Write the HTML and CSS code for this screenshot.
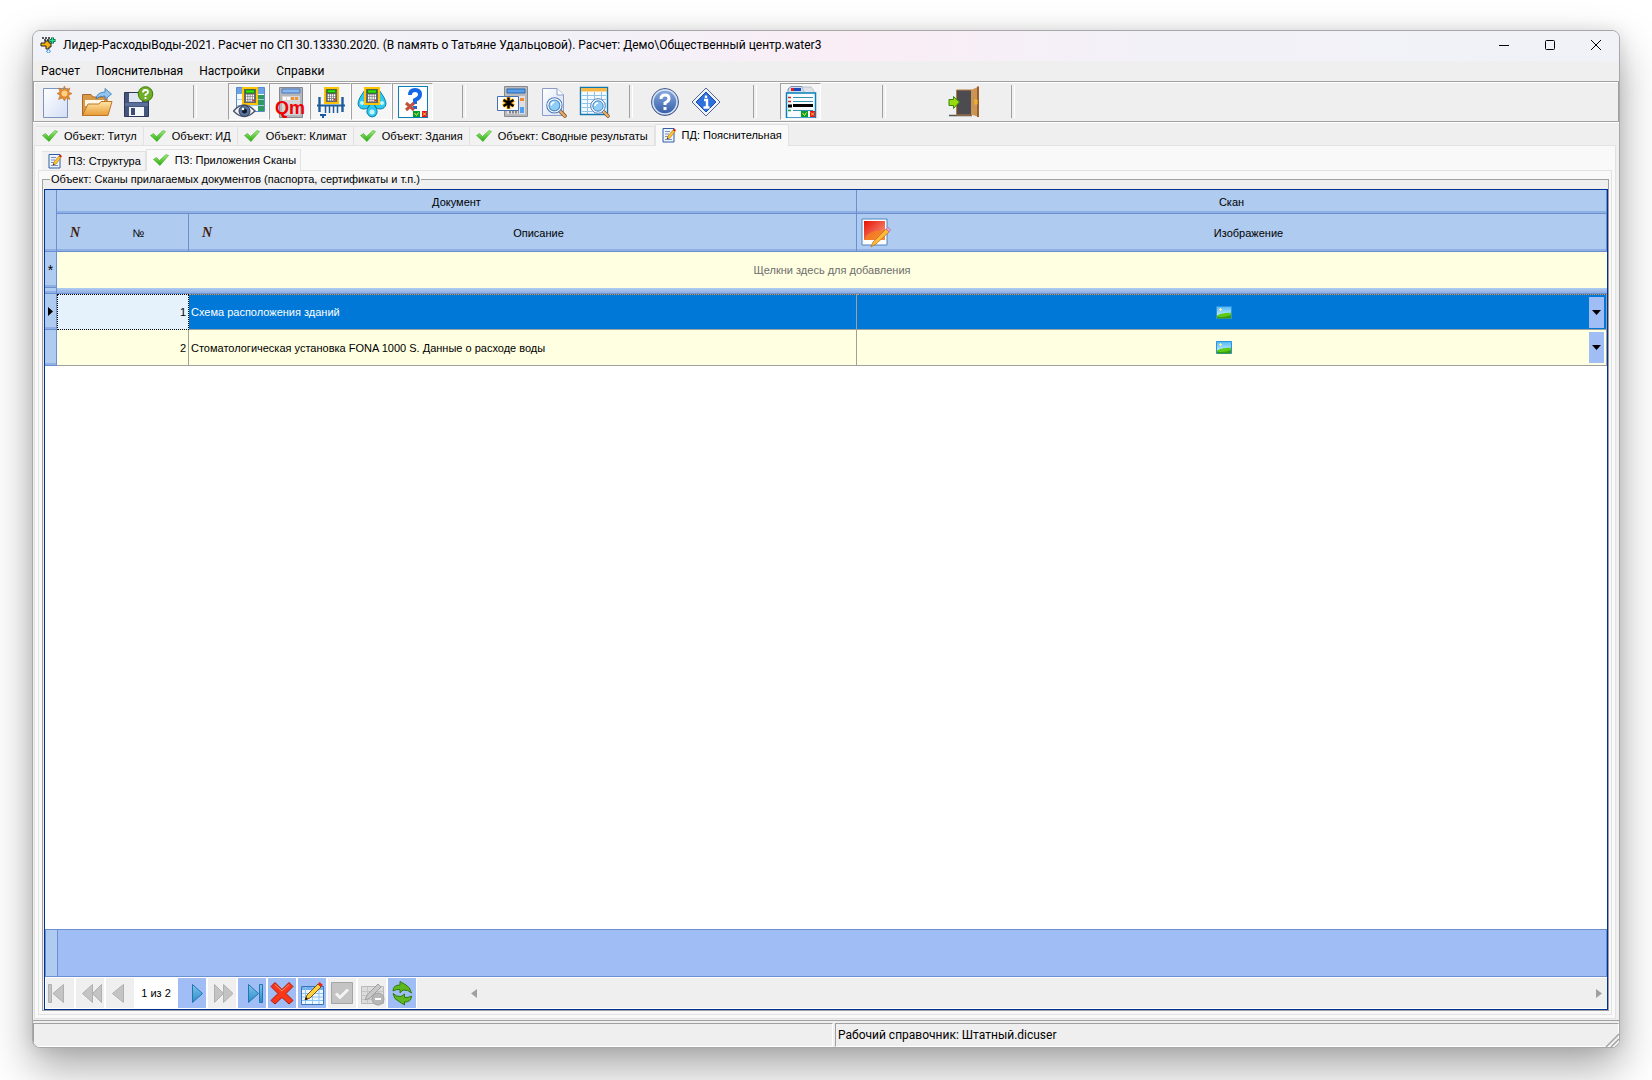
FILE: index.html
```
<!DOCTYPE html>
<html lang="ru">
<head>
  <meta charset="UTF-8">
  <meta name="viewport" content="width=device-width, initial-scale=1">
  <title>Лидер-РасходыВоды-2021</title>
  <link rel="stylesheet" href="styles.css">
</head>
<body>

<!-- shared icons -->
<svg class="defs" aria-hidden="true">
  <defs>
    <linearGradient id="gGreen" x1="0" y1="0" x2="0" y2="1"><stop offset="0" stop-color="#a4ee7c"/><stop offset="1" stop-color="#27a80e"/></linearGradient>
    <linearGradient id="gBlue" x1="0" y1="0" x2="0" y2="1"><stop offset="0" stop-color="#7cc4ec"/><stop offset="1" stop-color="#2a8cc8"/></linearGradient>
    <linearGradient id="gPage" x1="0" y1="0" x2="1" y2="1"><stop offset="0" stop-color="#fff"/><stop offset="1" stop-color="#d3def5"/></linearGradient>
    <linearGradient id="gFolder" x1="0" y1="0" x2="0" y2="1"><stop offset="0" stop-color="#ffe6a6"/><stop offset="1" stop-color="#e79a35"/></linearGradient>
    <linearGradient id="gSky" x1="0" y1="0" x2="0" y2="1"><stop offset="0" stop-color="#4fb8f8"/><stop offset="1" stop-color="#e6fbff"/></linearGradient>
    <linearGradient id="gRound" x1="0" y1="0" x2="0" y2="1"><stop offset="0" stop-color="#8fb0e2"/><stop offset="1" stop-color="#3058a4"/></linearGradient>
    <linearGradient id="gRed" x1="0" y1="0" x2="1" y2="1"><stop offset="0" stop-color="#e81004"/><stop offset="1" stop-color="#f8a88c"/></linearGradient>
    <symbol id="check" viewBox="0 0 16 12">
      <path d="M.5 5.500 3.500 3.500 6.500 6.500 13 .5 15.500 1.500 7 11.500Z" fill="url(#gGreen)" stroke="#3cae22" stroke-width=".6"/>
    </symbol>
    <symbol id="note" viewBox="0 0 14 16">
      <path d="M1 1.500H12V15H1Z" fill="#eef4ff" stroke="#2f5f9f"/>
      <path d="M3 4.500H8M3 7H7M3 9.500H6M3 12.500H10" stroke="#7890b8"/>
      <path d="M5 12 6 9 11 3 13 4.500 8 11Z" fill="#ffc630" stroke="#a86a10" stroke-width=".6"/>
      <path d="M11 3 12 1.500 14 3 13 4.500Z" fill="#e02010"/>
      <path d="M5 12 5.500 10.500 6.500 11.500Z" fill="#111"/>
    </symbol>
    <symbol id="calc" viewBox="0 0 16 18">
      <path d="M1 1H15V17H1Z" fill="#66666a" stroke="#ffc400" stroke-width="2"/>
      <path d="M3.500 3H12.500V6H3.500Z" fill="#35e010" stroke="#067006" stroke-width=".7"/>
      <path d="M4 8.500H12M4 11H12M4 13.500H12" stroke="#fff" stroke-width="1.800" stroke-dasharray="1.500 .7"/>
      <path d="M10.500 12.700H12.200V14.300H10.500Z" fill="#e02020"/>
    </symbol>
    <symbol id="lens" viewBox="0 0 20 20">
      <path d="M13 13 18 18" stroke="#8a5a30" stroke-width="3.600" stroke-linecap="round"/>
      <path d="M13.500 13.500 18 18" stroke="#e8b070" stroke-width="2" stroke-linecap="round"/>
      <circle cx="8" cy="8" r="6.500" fill="#a8dcf8" stroke="#fff" stroke-width="2.500"/>
      <circle cx="8" cy="8" r="7.300" fill="none" stroke="#4a78b8"/>
      <circle cx="8" cy="8" r="5.200" fill="#8ecdf4" stroke="#4a88cc"/>
      <path d="M5 8A3 3 0 0 1 8 5" fill="none" stroke="#fff" stroke-width="1.500"/>
    </symbol>
    <symbol id="okno" viewBox="0 0 15 6">
      <path d="M0 0H7V6H0Z" fill="#00a030"/><path d="M1.500 2 3.500 4.500 5.500 1.500" fill="none" stroke="#ffe040"/>
      <path d="M9 0H14V6H9Z" fill="#f01010"/><path d="M10 1.500 13 4.500M13 1.500 10 4.500" stroke="#ffe040"/>
    </symbol>
    <symbol id="pic" viewBox="0 0 16 13">
      <path d="M.5.500H15.500V12.500H.5Z" fill="url(#gSky)" stroke="#2f92e0"/>
      <path d="M1 9.500Q6 6.500 15 6.800V12H1Z" fill="#5ccc14"/><path d="M1 10.500Q8 12 15 9V12.500H1Z" fill="#3a9c08"/>
      <path d="M3 3.500H6M4.500 2V5" stroke="#fff690"/>
    </symbol>
    <symbol id="grid" viewBox="0 0 24 22">
      <path d="M.5 3.500H22.500V21.500H.5Z" fill="#eef6ff" stroke="#3a74b8"/>
      <path d="M1 4H22V7H1Z" fill="#78b0ec"/>
      <path d="M1 10.500H22M1 14H22M1 17.500H22M4.500 4V21M11.500 4V21M18 4V21" stroke="#8cc4f4"/>
    </symbol>
  </defs>
</svg>

<div class="window">
  <header class="titlebar">
    <svg class="app-icon" viewBox="0 0 16 16">
      <path d="M2 1H10M4 3H9" stroke="#222" stroke-width="1.500" stroke-dasharray="2 1"/>
      <path d="M1 6H5V4H9V6H11V10H9V12H6V9H1Z" fill="#f4b010" stroke="#222"/>
      <path d="M12.500.500V6.500M9.500 3.500H15.500" stroke="#065c38" stroke-width="3"/>
      <path d="M12.500 1V6M10 3.500H15" stroke="#20e090" stroke-width="1.400"/>
      <path d="M8.500 12 10.500 14.500 8.500 16 6.500 14.500Z" fill="#d8f0ff" stroke="#3890d8"/>
    </svg>
    <span class="title-text">Лидер-РасходыВоды-2021. Расчет по СП 30.13330.2020. (В память о Татьяне Удальцовой). Расчет: Демо\Общественный центр.water3</span>
    <div class="win-buttons">
      <button type="button" aria-label="Свернуть"><svg viewBox="0 0 12 12"><path d="M1 6.500H11" stroke="#000"/></svg></button>
      <button type="button" aria-label="Развернуть"><svg viewBox="0 0 12 12"><rect x="1.500" y="1.500" width="9" height="9" rx="1" fill="none" stroke="#000"/></svg></button>
      <button type="button" aria-label="Закрыть"><svg viewBox="0 0 12 12"><path d="M1 1 11 11M11 1 1 11" stroke="#000"/></svg></button>
    </div>
  </header>

  <nav class="menu">
    <button type="button">Расчет</button>
    <button type="button">Пояснительная</button>
    <button type="button">Настройки</button>
    <button type="button">Справки</button>
  </nav>

  <div class="toolbar">
    <button type="button" class="tool" aria-label="Новый">
      <svg viewBox="0 0 32 32"><path d="M3.500 2.500H27.500V31.500H3.500Z" fill="url(#gPage)" stroke="#7d93bd"/><path d="M24.500 0 26 4 30 2 28.500 6 32 7.500 28.500 9.500 30 13.500 26 12 24.500 15 22.500 12 18.500 13.500 20 9.500 17 7.500 20 6 18.500 2 22.500 4Z" fill="#e08a30" stroke="#b86a20" stroke-width=".5"/><circle cx="24.500" cy="7.500" r="3" fill="#ffd080"/></svg>
    </button>
    <button type="button" class="tool" aria-label="Открыть">
      <svg viewBox="0 0 32 32"><path d="M1.500 8.500H10L12 11H26V29.500H1.500Z" fill="#d99a48" stroke="#a8682a"/><path d="M4 14H23V20H4Z" fill="#fff8e8"/><path d="M1.500 29.500 7 18H18L20 15.500H31L27 29.500Z" fill="url(#gFolder)" stroke="#bd7628"/><path d="M15 13Q16 6 24 6V2.500L30.500 8 24 13.500V10Q18 10 15 13Z" fill="#8fc4ee" stroke="#3d74ac" stroke-width=".8"/></svg>
    </button>
    <button type="button" class="tool" aria-label="Сохранить">
      <svg viewBox="0 0 32 32"><path d="M2.500 6.500H22L26.500 10V30.500H2.500Z" fill="#46557c" stroke="#2c3858"/><path d="M7 7H20V16H7Z" fill="#dfe5ee"/><path d="M3 17H26V20H3Z" fill="#5c6f9c"/><path d="M7 21H22V30H7Z" fill="#f3f6fa"/><path d="M9 22H13V29H9Z" fill="#3c4c74"/><circle cx="23.500" cy="8" r="7.300" fill="#6eae28" stroke="#437c10"/><path d="M21 6.500Q21 4 23.500 4 26 4 26 6.200 26 7.500 23.500 8.500V10M23.500 11V13" fill="none" stroke="#fff" stroke-width="1.800"/></svg>
    </button>
    <span class="sep w70"></span>
    <button type="button" class="tool pressed" aria-label="Показать расчет">
      <svg viewBox="0 0 32 32"><path d="M3.500 1.500H31.500V25.500H3.500Z" fill="#f4f8ff" stroke="#5a8cc8"/><path d="M4 2H31V8H4Z" fill="#6aa2e4"/><path d="M25 9H31V25H25Z" fill="#2f9a60"/><path d="M4 13.500H31M4 19.500H31" stroke="#a8c8ea"/><use href="#calc" x="9" y="1" width="16" height="18"/><path d="M.5 25Q11 13 22 25 11 36 .5 25Z" fill="#f2f4fa" stroke="#50586c" stroke-width="1.500"/><circle cx="11.500" cy="25" r="5.500" fill="#58749c" stroke="#30405c"/><circle cx="11.500" cy="25" r="2.500" fill="#141c2c"/><circle cx="10" cy="23" r="1.300" fill="#fff"/></svg>
    </button>
    <button type="button" class="tool pressed" aria-label="Qm">
      <svg viewBox="0 0 32 32"><path d="M5.500 1.500H28.500V31.500H5.500Z" fill="#b4b6ba" stroke="#85888e"/><path d="M8 3H26V7H8Z" fill="#88b8f0" stroke="#4a78b8"/><path d="M8 10H26V29H8Z" fill="#d4d6da"/><path d="M9 12.500H17" stroke="#fff" stroke-width="3" stroke-dasharray="3 1"/><path d="M17 12.500H25" stroke="#f09030" stroke-width="3" stroke-dasharray="3 1"/><text x="16" y="28" text-anchor="middle" class="qm">Qm</text></svg>
    </button>
    <button type="button" class="tool pressed" aria-label="Трубопроводы">
      <svg viewBox="0 0 32 32"><path d="M4.500 11V26M27.500 11V26" stroke="#1c5c9c" stroke-width="2.400"/><path d="M2 19.500H30" stroke="#1c5c9c" stroke-width="2"/><path d="M10.500 19V27M14.500 19V27M18.500 19V27M22.500 19V27" stroke="#1c5c9c" stroke-width="1.500"/><path d="M5 28H11V30H9V32H7V30H5Z" fill="#1c5c9c"/><use href="#calc" x="9" y="1" width="15" height="17"/></svg>
    </button>
    <button type="button" class="tool pressed" aria-label="Расход воды">
      <svg viewBox="0 0 32 32"><path d="M9 4Q2 13 2 18 3 23 8 23 13 23 14 18ZM23 4Q30 13 30 18 29 23 24 23 19 23 18 18ZM16 15Q10 23 11 27 13 31 16 31 20 31 21 27 22 23 16 15Z" fill="#30c8ec" stroke="#1080a8"/><circle cx="6" cy="17" r="2" fill="#c8f6ff"/><circle cx="26" cy="17" r="2" fill="#c8f6ff"/><circle cx="16" cy="26" r="2.500" fill="#c8f6ff"/><use href="#calc" x="8" y="1" width="16" height="18"/></svg>
    </button>
    <button type="button" class="tool pressed" aria-label="Проверка">
      <svg viewBox="0 0 32 32"><rect x="1.500" y=".5" width="29" height="31" fill="#fff" stroke="#0a80b8"/><path d="M13 9Q13 4 18 4 23 4 23 8.500 23 12 18 14V18M18 20V23" fill="none" stroke="#1468e8" stroke-width="4"/><path d="M9 17 17 24M17 17 9 24" stroke="#c05040" stroke-width="3"/><use href="#okno" x="16" y="25" width="15" height="6"/></svg>
    </button>
    <span class="sep w58"></span>
    <button type="button" class="tool" aria-label="Новый расчет">
      <svg viewBox="0 0 32 32"><path d="M8.500.500H31.500V30.500H8.500Z" fill="#b8b9bc" stroke="#888a90"/><path d="M11 3H29V7H11Z" fill="#58a0ec" stroke="#2868b0"/><path d="M11 10H29V28H11Z" fill="#e0e0e2"/><path d="M24 12H28V15H24Z" fill="#f08830"/><path d="M24 21H28V27H24Z" fill="#50a0f0"/><path d="M13 26H23" stroke="#888" stroke-width="3" stroke-dasharray="2 1"/><path d="M1.500 10.500H22.500V24.500H1.500Z" fill="#fff" stroke="#4870b0"/><path d="M12.500 11V23M7 14 18 20M18 14 7 20" stroke="#ffb000" stroke-width="4"/><path d="M12.500 11.500V22.500M7.500 14 17.500 20M17.500 14 7.500 20" stroke="#000" stroke-width="2.400"/></svg>
    </button>
    <button type="button" class="tool" aria-label="Просмотр">
      <svg viewBox="0 0 32 32"><path d="M5.500 2.500H20L26.500 9V29.500H5.500Z" fill="url(#gPage)" stroke="#8c9cc8"/><path d="M20 2.500V9H26.500" fill="#fff" stroke="#8c9cc8"/><use href="#lens" x="9" y="11" width="21" height="21"/></svg>
    </button>
    <button type="button" class="tool" aria-label="Просмотр таблицы">
      <svg viewBox="0 0 32 32"><path d="M2.500 1.500H29.500V28.500H2.500Z" fill="#f4faff" stroke="#1078b0" stroke-width="1.400"/><path d="M3 2H29V5.500H3Z" fill="#f8b848"/><path d="M4 9.500H28M4 13.500H28M4 17.500H28M4 21.500H28M4 25.500H28M9.500 6V28M16.500 6V28M23.500 6V28" stroke="#90c4e4"/><use href="#lens" x="12" y="12" width="20" height="20"/></svg>
    </button>
    <span class="sep w30"></span>
    <button type="button" class="tool" aria-label="Справка">
      <svg viewBox="0 0 32 32"><circle cx="16" cy="16" r="13.500" fill="url(#gRound)" stroke="#4c5e84"/><circle cx="16" cy="16" r="12" fill="none" stroke="#d8e4f6" stroke-width="1.500"/><path d="M12 13Q12 9 16 9 20 9 20 12.500 20 15 16 17V19M16 21V24" fill="none" stroke="#fff" stroke-width="3"/></svg>
    </button>
    <button type="button" class="tool" aria-label="О программе">
      <svg viewBox="0 0 32 32"><path d="M16 2 30 16 16 30 2 16Z" fill="#f0f4fa" stroke="#50648c" stroke-linejoin="round"/><path d="M16 6 26 16 16 26 6 16Z" fill="#2f70dc" stroke="#1c50b0"/><path d="M14 14H17V21M13.500 21.500H19.500M16 9.500V12" fill="none" stroke="#fff" stroke-width="2.400"/></svg>
    </button>
    <span class="sep w54"></span>
    <button type="button" class="tool pressed" aria-label="Панель">
      <svg viewBox="0 0 32 32"><path d="M3 7V3L6 .5H17L21 5V8Z" fill="#cfdcee" stroke="#7e93b0"/><path d="M17 1H26L29 5V8H20Z" fill="#e0e4ea" stroke="#a0a8b4" stroke-width=".6"/><path d="M6 2H9V5H6Z" fill="#e02020"/><path d="M9 2H16V5H9Z" fill="#1a48c0"/><rect x="1.500" y="7" width="29" height="25" fill="#f8fcff" stroke="#0a80b8" stroke-width="1.500"/><path d="M8 11.500H28M8 15.500H28M8 24.500H28" stroke="#3890b4"/><path d="M8 19.500H28" stroke="#000" stroke-width="3"/><path d="M3 11.500H6M3 15.500H6" stroke="#e02020" stroke-width="1.500"/><path d="M3 18.500H7V21.500H3Z"/><path d="M3 24.500H6" stroke="#20a040" stroke-width="1.500"/><use href="#okno" x="16" y="25" width="15" height="6"/></svg>
    </button>
    <span class="sep w122"></span>
    <button type="button" class="tool" aria-label="Выход">
      <svg viewBox="0 0 32 32"><path d="M1 29.500H24" stroke="#555" stroke-width="1.500"/><path d="M8.500 4H24V29H8.500Z" fill="#4c4c50" stroke="#b87840"/><path d="M23 4 31 .5V31L23 28.500Z" fill="#cc9454"/><path d="M30 .500V31" stroke="#986030" stroke-width="2"/><path d="M27 14H29V18H27Z" fill="none" stroke="#ffc020"/><path d="M1 13.500H5.500V10.500L11.500 16 5.500 22.500V19.500H1Z" fill="#98dc10" stroke="#3c8408"/></svg>
    </button>
    <span class="sep w54"></span>
  </div>

  <main class="page">
    <div class="tabs" role="tablist">
      <button type="button" role="tab" class="tab"><svg class="ic-check"><use href="#check"/></svg>Объект: Титул</button>
      <button type="button" role="tab" class="tab"><svg class="ic-check"><use href="#check"/></svg>Объект: ИД</button>
      <button type="button" role="tab" class="tab"><svg class="ic-check"><use href="#check"/></svg>Объект: Климат</button>
      <button type="button" role="tab" class="tab"><svg class="ic-check"><use href="#check"/></svg>Объект: Здания</button>
      <button type="button" role="tab" class="tab"><svg class="ic-check"><use href="#check"/></svg>Объект: Сводные результаты</button>
      <button type="button" role="tab" class="tab active" aria-selected="true"><svg class="ic-note"><use href="#note"/></svg>ПД: Пояснительная</button>
    </div>

    <div class="pane">
      <div class="tabs inner" role="tablist">
        <button type="button" role="tab" class="tab"><svg class="ic-note"><use href="#note"/></svg>ПЗ: Структура</button>
        <button type="button" role="tab" class="tab active" aria-selected="true"><svg class="ic-check"><use href="#check"/></svg>ПЗ: Приложения Сканы</button>
      </div>

      <div class="pane inner-pane">
        <fieldset class="group">
          <legend>Объект: Сканы прилагаемых документов (паспорта, сертификаты и т.п.)</legend>
          <div class="grid">
            <table>
              <colgroup><col class="c-ind"><col class="c-num"><col class="c-desc"><col></colgroup>
              <thead>
                <tr class="band">
                  <th rowspan="2"></th>
                  <th colspan="2">Документ</th>
                  <th>Скан</th>
                </tr>
                <tr class="cols">
                  <th><div class="head"><i class="n">N</i><span>№</span></div></th>
                  <th><div class="head"><i class="n">N</i><span>Описание</span></div></th>
                  <th><div class="head">
                    <svg class="ic-image" viewBox="0 0 30 30"><path d="M1 1H26V27H1Z" fill="#fff" stroke="#4c84c0"/><path d="M3 3H24V22H3Z" fill="url(#gRed)"/><path d="M3 22Q6 12 24 12V22Z" fill="#f48418" opacity=".75"/><path d="M10 29 12 24 25 11 28 14 15 26Z" fill="#ffb838" stroke="#b06c20" stroke-width=".7"/><path d="M25 11 27 9 30 12 28 14Z" fill="#e0a0c8" stroke="#9c6c98" stroke-width=".5"/></svg>
                    <span>Изображение</span></div></th>
                </tr>
              </thead>
              <tbody>
                <tr class="new-row">
                  <th>*</th>
                  <td colspan="3">Щелкни здесь для добавления</td>
                </tr>
                <tr class="split"><th></th><td colspan="3"></td></tr>
                <tr class="row selected">
                  <th><svg class="ic-mark" viewBox="0 0 5 9"><path d="M0 0 5 4.500 0 9Z"/></svg></th>
                  <td class="num">1</td>
                  <td>Схема расположения зданий</td>
                  <td class="scan"><div><svg class="ic-pic"><use href="#pic"/></svg><button type="button" class="drop" aria-label="Открыть"><svg viewBox="0 0 9 5"><path d="M0 0H9L4.500 5Z"/></svg></button></div></td>
                </tr>
                <tr class="row">
                  <th></th>
                  <td class="num">2</td>
                  <td>Стоматологическая установка FONA 1000 S. Данные о расходе воды</td>
                  <td class="scan"><div><svg class="ic-pic"><use href="#pic"/></svg><button type="button" class="drop" aria-label="Открыть"><svg viewBox="0 0 9 5"><path d="M0 0H9L4.500 5Z"/></svg></button></div></td>
                </tr>
              </tbody>
            </table>
            <div class="grid-space"></div>
            <div class="grid-footer"><span></span></div>
            <div class="navigator">
              <button type="button" disabled aria-label="Первая"><svg viewBox="0 0 28 30"><path d="M2.500 6.500H5.500V24.500H2.500ZM17.500 6.500V24.500L7 15.500Z" class="off"/></svg></button>
              <button type="button" disabled aria-label="Страница назад"><svg viewBox="0 0 28 30"><path d="M16.500 6.500V24.500L6.500 15.500ZM25.500 6.500V24.500L16.500 15.500Z" class="off"/></svg></button>
              <button type="button" disabled aria-label="Назад"><svg viewBox="0 0 28 30"><path d="M17.500 6.500V24.500L6.500 15.500Z" class="off"/></svg></button>
              <span class="count">1 из 2</span>
              <button type="button" aria-label="Вперед"><svg viewBox="0 0 28 30"><path d="M14.500 6.500V24.500L24.500 15.500Z" class="on"/></svg></button>
              <button type="button" disabled aria-label="Страница вперед"><svg viewBox="0 0 28 30"><path d="M6.500 6.500V24.500L15.500 15.500ZM15.500 6.500V24.500L25 15.500Z" class="off"/></svg></button>
              <button type="button" aria-label="Последняя"><svg viewBox="0 0 28 30"><path d="M10.500 6.500V24.500L20.500 15.500ZM21.500 6.500H24.500V24.500H21.500Z" class="on"/></svg></button>
              <button type="button" aria-label="Удалить"><svg viewBox="0 0 28 30"><path d="M7 4.500 14 11.500 21 4.500 25 8.500 18 15.500 25 22.500 21 26 14 19.500 7 26 3 22.500 10 15.500 3 8.500Z" fill="#f83818" stroke="#b01808"/><path d="M7 6.500 14 13 21 6.500" fill="none" stroke="#ff9078"/></svg></button>
              <button type="button" aria-label="Изменить"><svg viewBox="0 0 28 30"><use href="#grid" x="3" y="5" width="24" height="22"/><path d="M7 22 9 17 20 6 23 9 12 20Z" fill="#ffd040" stroke="#7c5010"/><path d="M20 6 21.500 4 25 7 23 9Z" fill="#e82818"/><path d="M7 22 8 19 10 21Z"/></svg></button>
              <button type="button" disabled aria-label="Применить"><svg viewBox="0 0 28 30"><path d="M3.500 4.500H24.500V25.500H3.500Z" fill="#c4c4c4" stroke="#a4a4a4"/><path d="M8 15.500 12 19.500 20 11.500" fill="none" stroke="#f4f4f4" stroke-width="3"/></svg></button>
              <button type="button" disabled aria-label="Отменить"><svg viewBox="0 0 28 30"><path d="M3.500 8.500H25.500V25.500H3.500Z" fill="#dcdcdc" stroke="#b8b8b8"/><path d="M4 13.500H25M4 17.500H25M4 21.500H25M9.500 9V25M16.500 9V25" stroke="#c4c4c4"/><path d="M7 22 9 17 20 6 23 9 12 20Z" fill="#c8c8c8" stroke="#a0a0a0"/><circle cx="20" cy="21" r="6" fill="#b8b8b8" stroke="#a0a0a0"/><path d="M17 21H23" stroke="#fff" stroke-width="2"/></svg></button>
              <button type="button" aria-label="Обновить"><svg viewBox="0 0 28 30"><path d="M5 13Q5 7 12 7V3.500L18 7Q22 9 23.500 15Q20 11.500 15 12L12 15V11.500Q8 11 5 13Z" fill="#60b820" stroke="#2f7c0c"/><path d="M23.500 18Q23.500 24 16.500 24V27L11 23.500Q6 21.500 5 15.500Q8.500 19 13 18.500L16.500 16V19.500Q20 20 23.500 18Z" fill="#60b820" stroke="#2f7c0c"/></svg></button>
              <div class="scroller">
                <button type="button" aria-label="Влево"><svg viewBox="0 0 6 9"><path d="M6 0V9L0 4.500Z" fill="#a0a0a0"/></svg></button>
                <button type="button" aria-label="Вправо"><svg viewBox="0 0 6 9"><path d="M0 0V9L6 4.500Z" fill="#a0a0a0"/></svg></button>
              </div>
            </div>
          </div>
        </fieldset>
      </div>
    </div>
  </main>

  <footer class="status">
    <div class="status-cell"></div>
    <div class="status-cell">Рабочий справочник: Штатный.dicuser</div>
    <svg class="grip" viewBox="0 0 14 14"><path d="M1 14 14 1M6 14 14 6M11 14 14 11" stroke="#a0a0a0" stroke-width="1.400"/></svg>
  </footer>
</div>

</body>
</html>
```
FILE: styles.css
```
* {
  box-sizing: border-box;
}

body {
  margin: 0;
  height: 100vh;
  padding: 30px 32px 32px;
  background-color: #fff;
  font-family: 'Liberation Sans', sans-serif;
  font-size: 11px;
  color: #000;
  overflow: hidden;
}

button {
  margin: 0;
  padding: 0;
  border: none;
  background: none;
  font: inherit;
  color: inherit;
}

svg {
  display: block;
  flex: none;
}

.defs {
  position: absolute;
  width: 0;
  height: 0;
}

.window {
  display: flex;
  flex-direction: column;
  height: 100%;
  border: 1px solid #a8a8a8;
  border-radius: 8px;
  background-color: #efefef;
  overflow: hidden;
  box-shadow: 0 20px 44px rgba(0, 0, 0, 0.34), 0 0 16px rgba(0, 0, 0, 0.1);
}

/* title and menu */
.titlebar {
  display: flex;
  align-items: center;
  height: 30px;
  flex: none;
  padding: 0 0 2px 7px;
  background: linear-gradient(90deg, #f1f2f8 0%, #f3f1f8 35%, #faedf6 52%, #f3f1f8 70%, #f0f2f8 100%);
  font-family: Roboto, sans-serif;
  font-size: 12px;
}

.app-icon {
  width: 16px;
  height: 16px;
  margin-right: 7px;
}

.title-text {
  flex: 1;
  white-space: nowrap;
}

.win-buttons {
  display: flex;
}

.win-buttons button {
  display: flex;
  align-items: center;
  justify-content: center;
  width: 46px;
  height: 28px;
}

.win-buttons svg {
  width: 12px;
  height: 12px;
}

.menu {
  display: flex;
  gap: 16px;
  height: 20px;
  flex: none;
  padding: 0 0 1px 8px;
  font-family: Roboto, sans-serif;
  font-size: 12px;
}

/* toolbar */
.toolbar {
  display: flex;
  height: 41px;
  flex: none;
  padding: 1px;
  border: 1px solid #a0a0a0;
  box-shadow: inset 1px 1px #fff;
}

.tool {
  display: flex;
  align-items: center;
  justify-content: center;
  width: 41px;
}

.tool svg {
  width: 32px;
  height: 32px;
}

.pressed {
  border: 1px solid;
  border-color: #a0a0a0 #fff #fff #a0a0a0;
  background-color: #f6f6f6;
}

.qm {
  font: bold 18px 'Liberation Sans', sans-serif;
  fill: #f00000;
}

.sep {
  display: flex;
  justify-content: center;
  padding: 2px 0 2px 4px;
}

.sep::before {
  content: '';
  width: 2px;
  border-left: 1px solid #a0a0a0;
  border-right: 1px solid #fff;
}

.w30 { width: 30px; }
.w54 { width: 54px; }
.w58 { width: 58px; }
.w70 { width: 70px; }
.w122 { width: 122px; }

/* tabs */
.page {
  display: flex;
  flex-direction: column;
  flex: 1;
  min-height: 0;
  padding: 1px 3px 1px 1px;
  border-top: 1px solid #fff;
  border-bottom: 1px solid #a0a0a0;
}

.tabs {
  display: flex;
  align-items: flex-end;
  height: 21px;
  flex: none;
  padding-left: 2px;
}

.tab {
  display: flex;
  align-items: center;
  gap: 6px;
  height: 19px;
  padding: 0 6px;
  border: 1px solid #e2e2e2;
  border-left: none;
  border-bottom: none;
  background-color: #f2f2f2;
  white-space: nowrap;
}

.tab.active {
  height: 22px;
  margin-bottom: -1px;
  padding-bottom: 2px;
  border-left: 1px solid #e2e2e2;
  background-color: #f9f9f9;
  z-index: 1;
}

.inner {
  height: 24px;
  padding-left: 4px;
}

.inner .tab {
  padding-right: 4px;
}

.ic-check {
  width: 16px;
  height: 12px;
}

.ic-note {
  width: 14px;
  height: 16px;
}

.pane {
  display: flex;
  flex-direction: column;
  flex: 1;
  min-height: 0;
  padding: 0 3px;
  border: 1px solid #e2e2e2;
  background-color: #f9f9f9;
}

.pane > .inner-pane {
  margin-bottom: 3px;
  padding: 1px 2px 3px 3px;
}

.group {
  display: flex;
  flex-direction: column;
  flex: 1;
  min-width: 0;
  min-height: 0;
  margin: 0;
  padding: 3px 0 0 1px;
  border: 1px solid #a0a0a0;
  background-color: #efefef;
}

.group legend {
  height: 14px;
  margin-left: 6px;
  padding: 0 1px;
  line-height: 14px;
}

/* data grid */
.grid {
  display: flex;
  flex-direction: column;
  flex: 1;
  min-height: 0;
  border: 1px solid #003090;
  background-color: #fff;
}

table {
  width: 100%;
  table-layout: fixed;
  border-collapse: separate;
  border-spacing: 0;
}

.c-ind { width: 12px; }
.c-num { width: 132px; }
.c-desc { width: 668px; }

th,
td {
  padding: 0;
  font-weight: normal;
}

th {
  border-right: 1px solid #6c8fd0;
  border-bottom: 1px solid #6c8fd0;
  background: linear-gradient(#afcbf0, #afcbf0) no-repeat, #8fb0e4;
  background-size: 100% calc(100% - 2px);
}

.band th {
  height: 24px;
}

.cols th {
  height: 38px;
}

.head {
  display: flex;
  align-items: center;
  height: 30px;
  padding-left: 4px;
}

.head span {
  flex: 1;
}

.n {
  width: 28px;
  font: italic bold 14px 'Liberation Serif', serif;
  color: #40200c;
  text-align: center;
}

.ic-image {
  width: 30px;
  height: 30px;
}

.new-row td {
  height: 36px;
  background-color: #ffffe1;
  color: #6d6d6d;
  text-align: center;
}

.new-row th {
  font-size: 14px;
}

.split td,
.split th {
  height: 6px;
}

.split td {
  border-bottom: 1px solid #6c8fd0;
  background: linear-gradient(#afcbf0, #8fb0e4);
}

.row td {
  height: 36px;
  padding: 0 2px;
  border-right: 1px solid #a0a0a0;
  border-bottom: 1px solid #a0a0a0;
  background-color: #ffffe1;
}

.row .num {
  text-align: right;
}

.selected td {
  border-top: 1px dotted #f09030;
  background-color: #0078d7;
  color: #fff;
}

.selected .num {
  border: 1px dotted #000;
  background-color: #e5f1fb;
  color: #000;
}

.ic-mark {
  width: 5px;
  height: 9px;
  margin-left: 3px;
}

.scan div {
  display: flex;
  align-items: center;
}

.ic-pic {
  width: 16px;
  height: 13px;
  margin: 0 auto;
}

.drop {
  display: flex;
  align-items: center;
  justify-content: center;
  width: 15px;
  height: 31px;
  background-color: #a0bdf5;
}

.drop svg {
  width: 9px;
  height: 5px;
}

.grid-space {
  flex: 1;
}

.grid-footer {
  height: 48px;
  flex: none;
  border: 1px solid #6c8fd0;
  background-color: #a0bdf5;
}

.grid-footer span {
  display: block;
  width: 12px;
  height: 100%;
  border-right: 1px solid #6c8fd0;
  background-color: #afcbf0;
}

.navigator {
  display: flex;
  gap: 2px;
  height: 32px;
  flex: none;
  padding: 1px 0 1px 1px;
}

.navigator > button {
  width: 28px;
  background-color: #a0bdf5;
}

.navigator > button:disabled {
  background-color: #efefef;
}

.navigator > button svg {
  width: 28px;
  height: 30px;
}

.off {
  fill: #c4c4c4;
  stroke: #b0b0b0;
}

.on {
  fill: url(#gBlue);
  stroke: #2474b0;
}

.count {
  width: 40px;
  line-height: 30px;
  text-align: center;
}

.scroller {
  display: flex;
  align-items: center;
  justify-content: space-between;
  flex: 1;
  margin-left: -1px;
  padding: 0 5px 0 54px;
  background-color: #efefef;
}

.scroller svg {
  width: 6px;
  height: 9px;
}

/* status bar */
.status {
  display: flex;
  gap: 2px;
  height: 26px;
  flex: none;
  padding-top: 2px;
  position: relative;
  font-family: Roboto, sans-serif;
  font-size: 12px;
}

.status-cell {
  width: 800px;
  padding-left: 2px;
  border: 1px solid;
  border-color: #a0a0a0 #fff #fff #a0a0a0;
  line-height: 22px;
}

.status-cell + .status-cell {
  flex: 1;
}

.grip {
  position: absolute;
  right: 0;
  bottom: 0;
  width: 14px;
  height: 14px;
}
```
